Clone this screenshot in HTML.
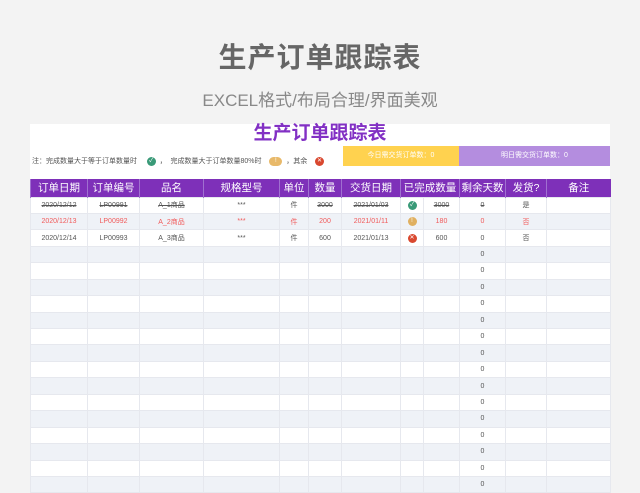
<!DOCTYPE html>
<html><head><meta charset="utf-8"><style>
*{margin:0;padding:0;box-sizing:border-box}
body{width:640px;height:485px;background:#f3f3f3;font-family:"Liberation Sans","Noto Sans CJK SC",sans-serif;position:relative;overflow:hidden}
.t1{position:absolute;top:36px;left:0;width:640px;text-align:center;font-size:28px;color:#666;font-weight:bold;letter-spacing:1px}
.t2{position:absolute;top:86px;left:0;width:640px;text-align:center;font-size:17px;color:#888}
.sheet{position:absolute;left:30px;top:124px;width:580px;height:361px;background:#fff}
.st{position:absolute;top:0;left:0;width:580px;text-align:center;font-size:19px;font-weight:bold;color:#8230c4;line-height:20px}
.note{position:absolute;left:2px;top:32px;font-size:7px;color:#555}
.ic{display:inline-block;width:9px;height:9px;border-radius:50%;vertical-align:middle;color:#fff;font-size:6px;text-align:center;line-height:9px}
.yb{position:absolute;left:313px;top:22px;width:116px;height:20px;background:#ffd24f;color:#fff;font-size:7px;text-align:center;line-height:20px}
.pb{position:absolute;left:429px;top:22px;width:151px;height:20px;background:#b48ddf;color:#fff;font-size:7px;text-align:center;line-height:20px}
table{position:absolute;left:0;top:55px;border-collapse:collapse;table-layout:fixed;width:580px}
th{background:#7e30b9;color:#fff;font-weight:normal;font-size:10.5px;height:18px;border-left:1px solid #a070d0}
td{height:16.45px;font-size:7px;color:#555;text-align:center;border:1px solid #e6e8ee;padding:0}
tr.s td{background:#eff2f7}
tr.r td{color:#f05a5a}
.del{text-decoration:line-through}
</style></head><body>
<div class="t1">生产订单跟踪表</div>
<div class="t2">EXCEL格式/布局合理/界面美观</div>
<div class="sheet">
<div class="st">生产订单跟踪表</div>
<div class="note">注：完成数量大于等于订单数量时 &nbsp;&nbsp;&nbsp;&nbsp;<span class="ic" style="background:#3a9a78">✓</span>&nbsp;&nbsp;， &nbsp;完成数量大于订单数量80%时 &nbsp;&nbsp;&nbsp;<span class="ic" style="background:#e8b96a;width:13px;border-radius:6px">!</span>&nbsp;&nbsp;，其余 &nbsp;&nbsp;&nbsp;<span class="ic" style="background:#d9482f">✕</span></div>
<div class="yb">今日需交货订单数：0</div>
<div class="pb">明日需交货订单数：0</div>
<table>
<colgroup><col style="width:57px"><col style="width:52px"><col style="width:64px"><col style="width:76px"><col style="width:29px"><col style="width:33px"><col style="width:59px"><col style="width:23px"><col style="width:36px"><col style="width:46px"><col style="width:41px"><col style="width:64px"></colgroup>
<tr><th>订单日期</th><th>订单编号</th><th>品名</th><th>规格型号</th><th>单位</th><th>数量</th><th>交货日期</th><th colspan="2">已完成数量</th><th>剩余天数</th><th>发货?</th><th>备注</th></tr>
<tr><td class="del">2020/12/12</td><td class="del">LP00991</td><td class="del">A_1商品</td><td>***</td><td>件</td><td class="del">3000</td><td class="del">2021/01/03</td><td><span class="ic" style="background:#3a9a78">✓</span></td><td class="del">3000</td><td class="del">0</td><td>是</td><td></td></tr>
<tr class="s r"><td>2020/12/13</td><td>LP00992</td><td>A_2商品</td><td>***</td><td>件</td><td>200</td><td>2021/01/11</td><td><span class="ic" style="background:#e0b060">!</span></td><td>180</td><td>0</td><td>否</td><td></td></tr>
<tr><td>2020/12/14</td><td>LP00993</td><td>A_3商品</td><td>***</td><td>件</td><td>600</td><td>2021/01/13</td><td><span class="ic" style="background:#d9482f">✕</span></td><td>600</td><td>0</td><td>否</td><td></td></tr>
<tr class="s"><td></td><td></td><td></td><td></td><td></td><td></td><td></td><td></td><td></td><td>0</td><td></td><td></td></tr>
<tr><td></td><td></td><td></td><td></td><td></td><td></td><td></td><td></td><td></td><td>0</td><td></td><td></td></tr>
<tr class="s"><td></td><td></td><td></td><td></td><td></td><td></td><td></td><td></td><td></td><td>0</td><td></td><td></td></tr>
<tr><td></td><td></td><td></td><td></td><td></td><td></td><td></td><td></td><td></td><td>0</td><td></td><td></td></tr>
<tr class="s"><td></td><td></td><td></td><td></td><td></td><td></td><td></td><td></td><td></td><td>0</td><td></td><td></td></tr>
<tr><td></td><td></td><td></td><td></td><td></td><td></td><td></td><td></td><td></td><td>0</td><td></td><td></td></tr>
<tr class="s"><td></td><td></td><td></td><td></td><td></td><td></td><td></td><td></td><td></td><td>0</td><td></td><td></td></tr>
<tr><td></td><td></td><td></td><td></td><td></td><td></td><td></td><td></td><td></td><td>0</td><td></td><td></td></tr>
<tr class="s"><td></td><td></td><td></td><td></td><td></td><td></td><td></td><td></td><td></td><td>0</td><td></td><td></td></tr>
<tr><td></td><td></td><td></td><td></td><td></td><td></td><td></td><td></td><td></td><td>0</td><td></td><td></td></tr>
<tr class="s"><td></td><td></td><td></td><td></td><td></td><td></td><td></td><td></td><td></td><td>0</td><td></td><td></td></tr>
<tr><td></td><td></td><td></td><td></td><td></td><td></td><td></td><td></td><td></td><td>0</td><td></td><td></td></tr>
<tr class="s"><td></td><td></td><td></td><td></td><td></td><td></td><td></td><td></td><td></td><td>0</td><td></td><td></td></tr>
<tr><td></td><td></td><td></td><td></td><td></td><td></td><td></td><td></td><td></td><td>0</td><td></td><td></td></tr>
<tr class="s"><td></td><td></td><td></td><td></td><td></td><td></td><td></td><td></td><td></td><td>0</td><td></td><td></td></tr>
</table>
</div>
</body></html>
